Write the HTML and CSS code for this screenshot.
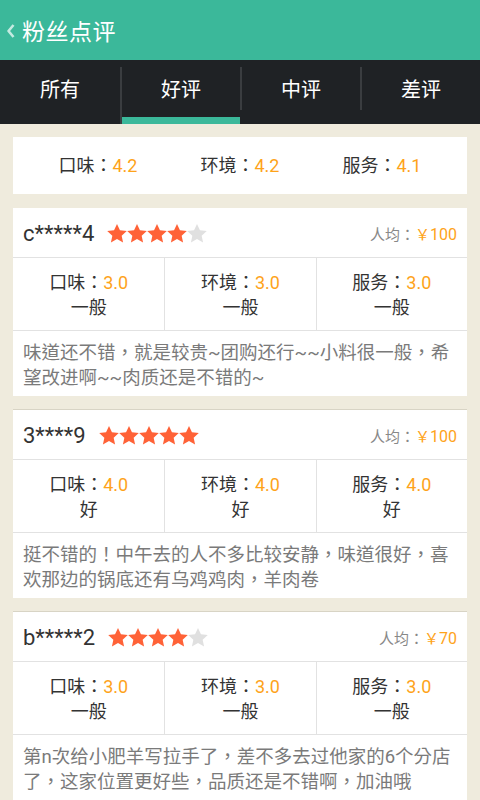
FILE: index.html
```html
<!DOCTYPE html>
<html lang="zh-CN">
<head>
<meta charset="utf-8">
<link rel="stylesheet" href="styles.css">
</head>
<body>
<svg class="defs" width="0" height="0">
  <defs>
    <path id="star" d="M12 1.5l3.1 6.6 7.2.8-5.4 4.9 1.5 7.1L12 17.3l-6.4 3.6 1.5-7.1-5.4-4.9 7.2-.8z"/>
  </defs>
</svg>
<header class="topbar">
  <svg class="back" width="10" height="14" viewBox="0 0 10 14"><path d="M7.5 1L2.5 7l5 6" fill="none" stroke="currentColor" stroke-width="2.6" stroke-linejoin="round"/></svg>
  <h1 class="title">粉丝点评</h1>
</header>
<nav class="tabs">
  <div class="tab">所有</div>
  <div class="tab active">好评</div>
  <div class="tab">中评</div>
  <div class="tab">差评</div>
</nav>
<main class="content">
  <section class="summary">
    <div class="sum-item">口味<span class="pn" lang="zh-Hant">：</span><span class="num">4.2</span></div>
    <div class="sum-item">环境<span class="pn" lang="zh-Hant">：</span><span class="num">4.2</span></div>
    <div class="sum-item">服务<span class="pn" lang="zh-Hant">：</span><span class="num">4.1</span></div>
  </section>

  <article class="review first">
    <div class="rev-head">
      <span class="user">c*****4</span>
      <span class="stars">
        <svg viewBox="1.6 1.5 20.8 20"><use href="#star"/></svg><svg viewBox="1.6 1.5 20.8 20"><use href="#star"/></svg><svg viewBox="1.6 1.5 20.8 20"><use href="#star"/></svg><svg viewBox="1.6 1.5 20.8 20"><use href="#star"/></svg><svg class="off" viewBox="1.6 1.5 20.8 20"><use href="#star"/></svg>
      </span>
      <span class="avg">人均<span class="pn" lang="zh-Hant">：</span><span class="num"><span class="yen">￥</span>100</span></span>
    </div>
    <div class="rev-scores">
      <div class="score"><div>口味<span class="pn" lang="zh-Hant">：</span><span class="num">3.0</span></div><div>一般</div></div>
      <div class="score"><div>环境<span class="pn" lang="zh-Hant">：</span><span class="num">3.0</span></div><div>一般</div></div>
      <div class="score"><div>服务<span class="pn" lang="zh-Hant">：</span><span class="num">3.0</span></div><div>一般</div></div>
    </div>
    <p class="rev-text" lang="zh-Hant">味道还不错，就是较贵~团购还行~~小料很一般，希望改进啊~~肉质还是不错的~</p>
  </article>

  <article class="review">
    <div class="rev-head">
      <span class="user">3****9</span>
      <span class="stars">
        <svg viewBox="1.6 1.5 20.8 20"><use href="#star"/></svg><svg viewBox="1.6 1.5 20.8 20"><use href="#star"/></svg><svg viewBox="1.6 1.5 20.8 20"><use href="#star"/></svg><svg viewBox="1.6 1.5 20.8 20"><use href="#star"/></svg><svg viewBox="1.6 1.5 20.8 20"><use href="#star"/></svg>
      </span>
      <span class="avg">人均<span class="pn" lang="zh-Hant">：</span><span class="num"><span class="yen">￥</span>100</span></span>
    </div>
    <div class="rev-scores">
      <div class="score"><div>口味<span class="pn" lang="zh-Hant">：</span><span class="num">4.0</span></div><div>好</div></div>
      <div class="score"><div>环境<span class="pn" lang="zh-Hant">：</span><span class="num">4.0</span></div><div>好</div></div>
      <div class="score"><div>服务<span class="pn" lang="zh-Hant">：</span><span class="num">4.0</span></div><div>好</div></div>
    </div>
    <p class="rev-text" lang="zh-Hant">挺不错的！中午去的人不多比较安静，味道很好，喜欢那边的锅底还有乌鸡鸡肉，羊肉卷</p>
  </article>

  <article class="review">
    <div class="rev-head">
      <span class="user">b*****2</span>
      <span class="stars">
        <svg viewBox="1.6 1.5 20.8 20"><use href="#star"/></svg><svg viewBox="1.6 1.5 20.8 20"><use href="#star"/></svg><svg viewBox="1.6 1.5 20.8 20"><use href="#star"/></svg><svg viewBox="1.6 1.5 20.8 20"><use href="#star"/></svg><svg class="off" viewBox="1.6 1.5 20.8 20"><use href="#star"/></svg>
      </span>
      <span class="avg">人均<span class="pn" lang="zh-Hant">：</span><span class="num"><span class="yen">￥</span>70</span></span>
    </div>
    <div class="rev-scores">
      <div class="score"><div>口味<span class="pn" lang="zh-Hant">：</span><span class="num">3.0</span></div><div>一般</div></div>
      <div class="score"><div>环境<span class="pn" lang="zh-Hant">：</span><span class="num">3.0</span></div><div>一般</div></div>
      <div class="score"><div>服务<span class="pn" lang="zh-Hant">：</span><span class="num">3.0</span></div><div>一般</div></div>
    </div>
    <p class="rev-text" lang="zh-Hant">第n次给小肥羊写拉手了，差不多去过他家的6个分店了，这家位置更好些，品质还是不错啊，加油哦</p>
  </article>
</main>
</body>
</html>
```

FILE: styles.css
```css
* { box-sizing: border-box; }
html, body { margin: 0; padding: 0; }
body {
  width: 480px;
  height: 800px;
  overflow: hidden;
  background: #efebdd;
  font-family: Roboto, "Noto Sans CJK SC", sans-serif;
  color: #333;
}
.defs { position: absolute; }
.pn { font-family: "Noto Sans CJK TC", sans-serif; line-height: 0; }

.topbar {
  height: 60px;
  background: #3bb89a;
  display: flex;
  align-items: center;
  padding-left: 4px;
  color: #fff;
}
.back { color: rgba(255,255,255,0.7); margin: 2px 6px 0 2px; }
.title {
  margin: 0;
  font-size: 23px;
  font-weight: normal;
  letter-spacing: 0.5px;
}

.tabs {
  height: 64px;
  background: #1f2225;
  display: grid;
  grid-template-columns: repeat(4, 1fr);
}
.tab {
  display: flex;
  align-items: center;
  justify-content: center;
  color: #fff;
  font-size: 20px;
  border-left: 2px solid #3a3d40;
  margin: 7px 0 14px;
}
.tab:first-child { border-left: none; }
.tab.active {
  margin: 7px 0 0;
  padding-bottom: 14px;
  background: linear-gradient(#3bb89a, #3bb89a) bottom / 100% 7px no-repeat;
}

.content { padding: 13px 13px 0; }

.summary {
  background: #fff;
  height: 57px;
  display: grid;
  grid-template-columns: repeat(3, 1fr);
  align-items: center;
  padding: 0 14px;
  margin-bottom: 14px;
}
.sum-item { text-align: center; font-size: 18px; line-height: 25px; color: #333; }
.num { color: #fea31a; }

.review {
  background: #fff;
  margin-bottom: 13px;
  border-top: 1px solid #d8d4c5;
}
.review.first { border-top: none; }
.rev-head {
  height: 50px;
  display: flex;
  align-items: center;
  padding: 2px 10px 0;
  border-bottom: 1px solid #e2e2e2;
}
.user { font-size: 22px; color: #333; }
.stars { display: flex; margin-left: 13px; }
.stars svg { width: 20px; height: 19px; fill: #ff6237; }
.stars svg.off { fill: #e0e0e0; }
.avg { margin-left: auto; font-size: 15px; color: #888; }
.avg .num { font-size: 16px; }
.yen { font-family: "Noto Sans CJK SC", sans-serif; font-size: 15px; line-height: 0; }

.rev-scores {
  display: grid;
  grid-template-columns: repeat(3, 1fr);
  border-bottom: 1px solid #e2e2e2;
}
.score {
  text-align: center;
  font-size: 18px;
  line-height: 25px;
  padding: 12px 0 10px;
  border-left: 1px solid #e2e2e2;
}
.score:first-child { border-left: none; }

.rev-text {
  margin: 0;
  padding: 10px 10px 5px;
  font-family: Roboto, "Noto Sans CJK TC", sans-serif;
  font-size: 18.5px;
  line-height: 25px;
  color: #7a7a7a;
}
```
